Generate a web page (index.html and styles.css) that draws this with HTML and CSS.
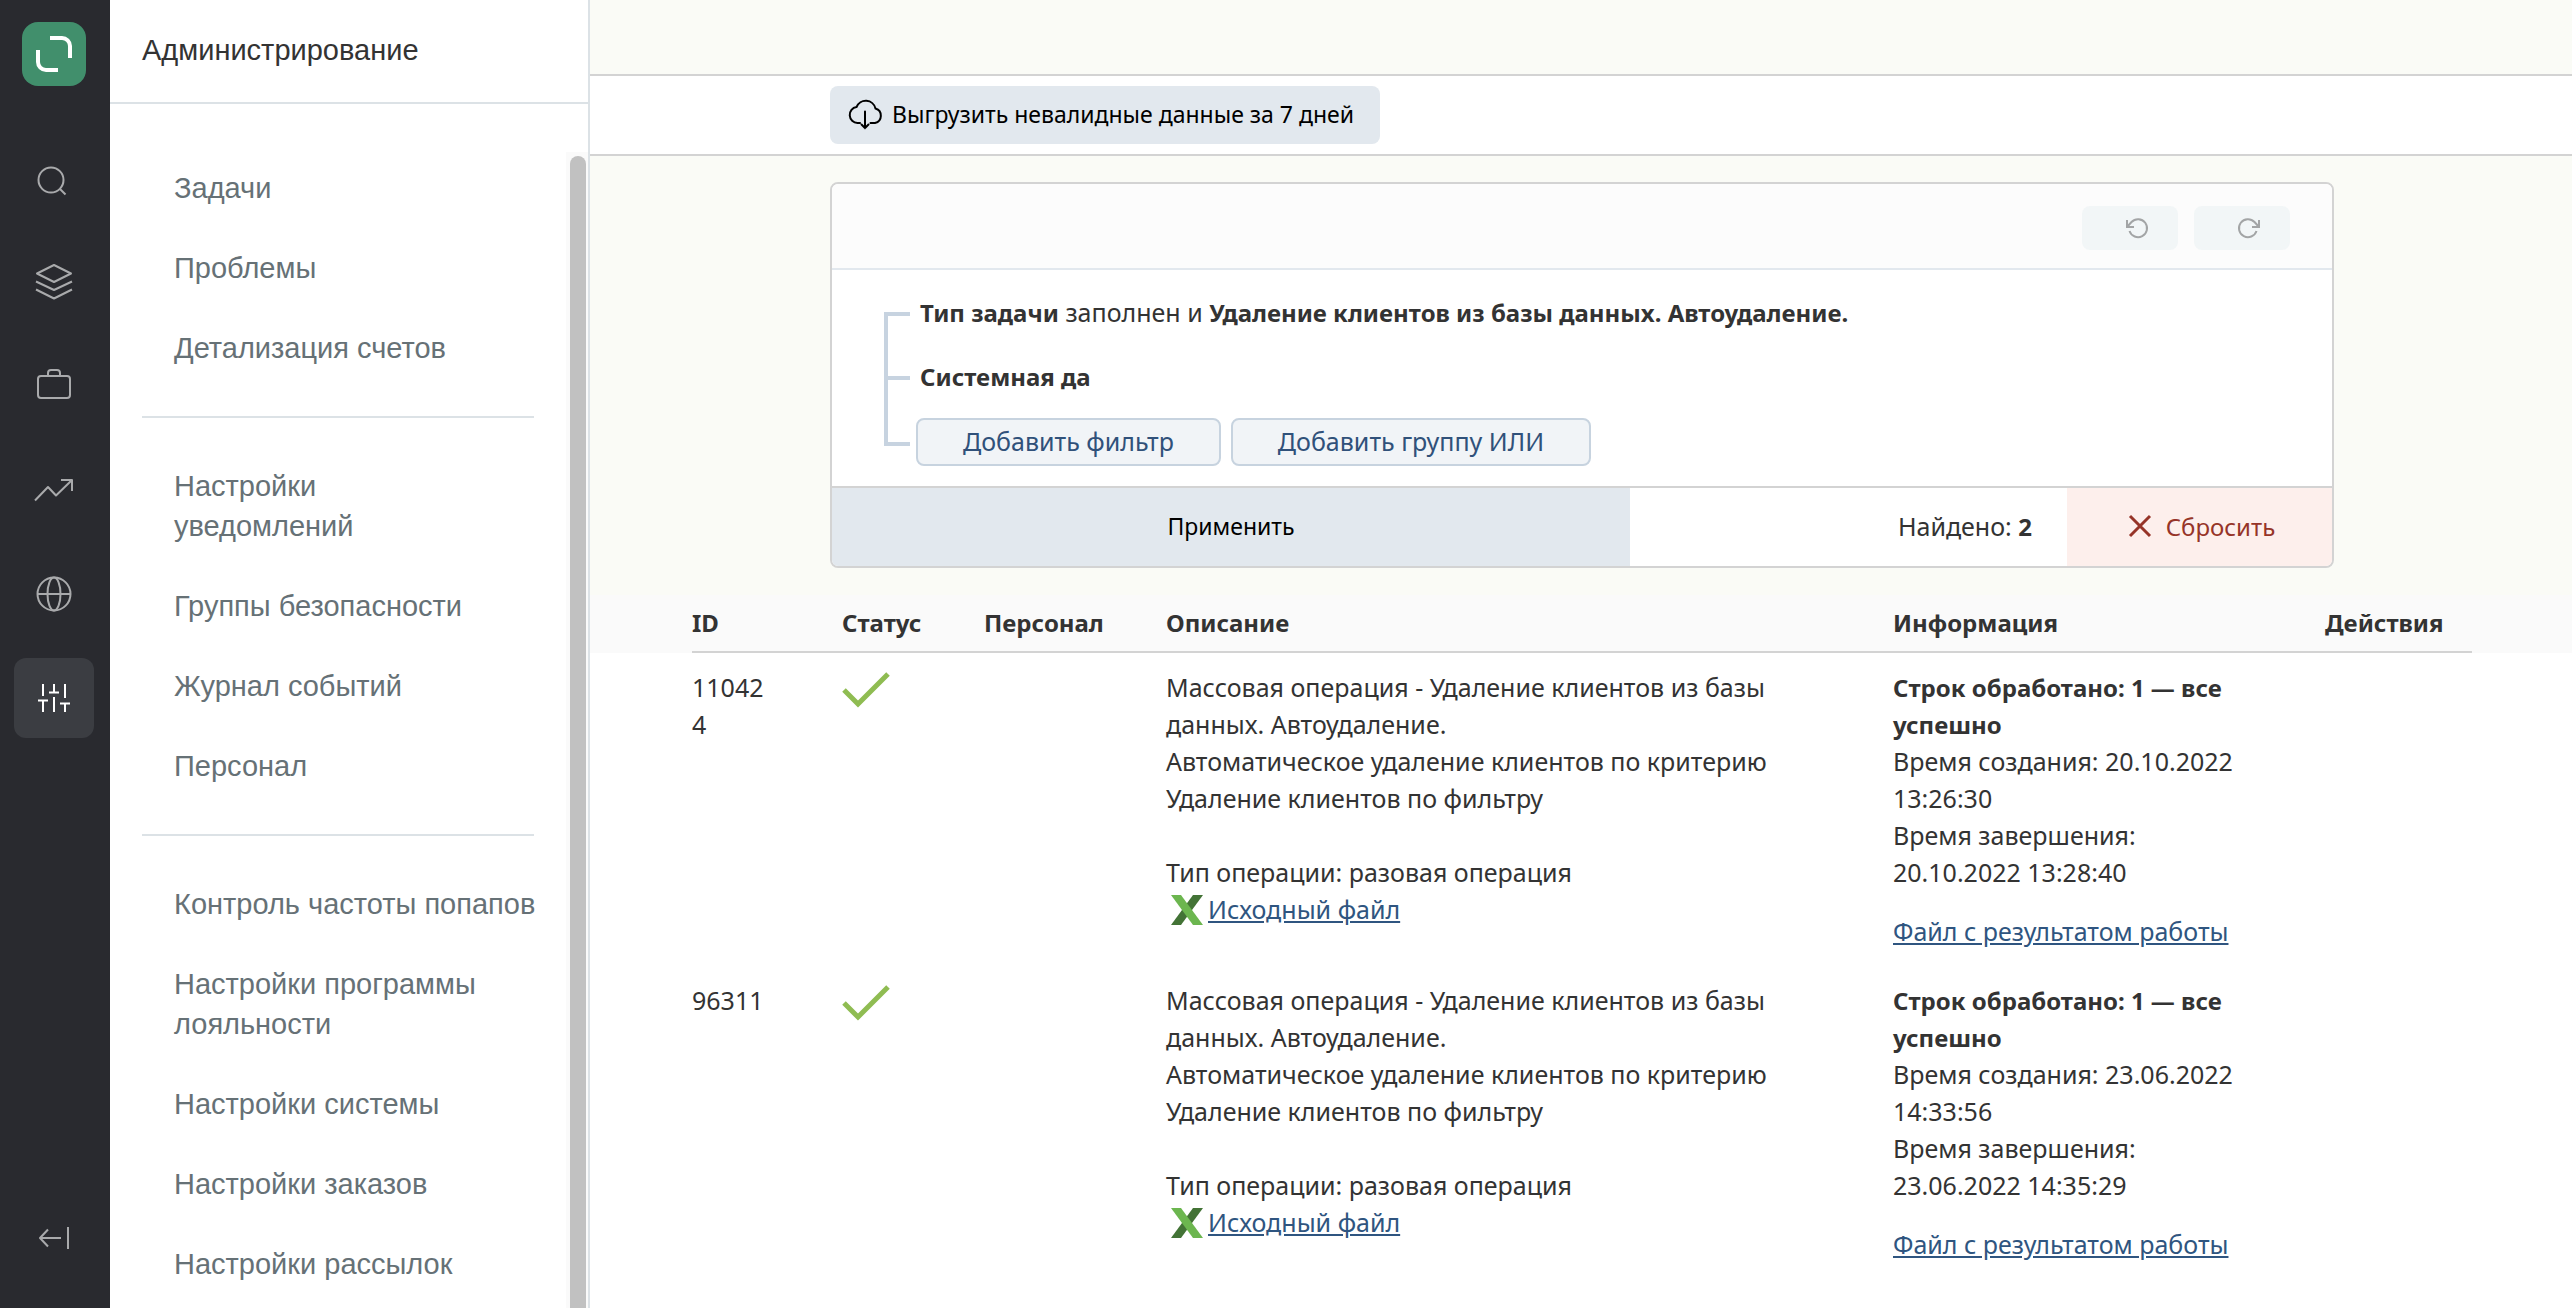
FILE: index.html
```html
<!DOCTYPE html>
<html lang="ru">
<head>
<meta charset="utf-8">
<title>Администрирование</title>
<link rel="stylesheet" href="styles.css">
</head>
<body>
<div class="app">
  <nav class="rail" aria-label="Разделы">
    <a class="logo" href="#" aria-label="Главная">
      <svg width="64" height="64" viewBox="0 0 64 64" fill="none" stroke="#fff" stroke-width="4"><path d="M28 16h12a8 8 0 0 1 8 8v12M16 28v12a8 8 0 0 0 8 8h12"/></svg>
    </a>
    <div class="rail-items">
      <button class="rail-btn" aria-label="Поиск"><svg class="ico" viewBox="0 0 40 40"><circle cx="17" cy="22" r="12.500"/><path d="M26 31l5.500 5.500"/></svg></button>
      <button class="rail-btn" aria-label="Слои"><svg class="ico" viewBox="0 0 40 40"><path d="M20 3l17 8.500L20 20 3 11.500zM2 19.500l18 8.500 18-8.500M2 27.500L20 36.500l18-9"/></svg></button>
      <button class="rail-btn" aria-label="Портфель"><svg class="ico" viewBox="0 0 40 40"><rect x="4" y="10" width="32" height="22" rx="3"/><path d="M14 10V7a3 3 0 0 1 3-3h6a3 3 0 0 1 3 3v3"/></svg></button>
      <button class="rail-btn" aria-label="Аналитика"><svg class="ico" viewBox="0 0 40 40"><path d="M1 30.500L14 17l8 8.500L38 10M27 10h11v11"/></svg></button>
      <button class="rail-btn" aria-label="Сайт"><svg class="ico" viewBox="0 0 40 40"><circle cx="20" cy="20" r="16.500"/><ellipse cx="20" cy="20" rx="6.500" ry="16.500"/><path d="M3.500 20h33"/></svg></button>
      <button class="rail-btn active" aria-label="Настройки"><svg class="ico" viewBox="0 0 40 40"><path d="M9 6v12M9 22.500V34M4 22.500h10M20 6v8.500M15 14.500h10M20 19v15M31 6v14M31 25.500V34M26 25.500h10"/></svg></button>
    </div>
    <button class="rail-btn collapse" aria-label="Свернуть"><svg class="ico" viewBox="0 0 40 40"><path d="M27 20H6M14 11.500L6 20l8 8.500M34 9v22"/></svg></button>
  </nav>

  <aside class="panel">
    <h1 class="panel-title">Администрирование</h1>
    <div class="panel-body">
      <div class="menu">
        <ul class="menu-group">
          <li><a href="#">Задачи</a></li>
          <li><a href="#">Проблемы</a></li>
          <li><a href="#">Детализация счетов</a></li>
        </ul>
        <ul class="menu-group">
          <li><a href="#">Настройки<br>уведомлений</a></li>
          <li><a href="#">Группы безопасности</a></li>
          <li><a href="#">Журнал событий</a></li>
          <li><a href="#">Персонал</a></li>
        </ul>
        <ul class="menu-group">
          <li><a href="#">Контроль частоты попапов</a></li>
          <li><a href="#">Настройки программы<br>лояльности</a></li>
          <li><a href="#">Настройки системы</a></li>
          <li><a href="#">Настройки заказов</a></li>
          <li><a href="#">Настройки рассылок</a></li>
        </ul>
      </div>
      <div class="scroll-track"><div class="scroll-thumb"></div></div>
    </div>
  </aside>

  <main class="main">
    <div class="topbar"></div>
    <div class="toolbar">
      <button class="export-btn">
        <svg class="cloud" width="36" height="32" viewBox="0 0 36 32"><path d="M12 25H9.500a8 8 0 0 1-1-15.900A10 10 0 0 1 27.500 10.500a7.500 7.500 0 0 1-.5 14.500h-4.500M17 13.500v16.500M13.500 26.500l3.500 3.500 3.500-3.500"/></svg>
        <span>Выгрузить невалидные данные за 7 дней</span>
      </button>
    </div>

    <section class="filter-wrap">
      <div class="filter">
        <div class="filter-head">
          <button class="hist-btn" aria-label="Отменить"><svg width="24" height="24" viewBox="0 0 24 24"><path d="M2 4v7h7M2 11l4.500-5A9 9 0 1 1 4.500 15"/></svg></button>
          <button class="hist-btn" aria-label="Повторить"><svg width="24" height="24" viewBox="0 0 24 24"><path d="M22 4v7h-7M22 11l-4.500-5A9 9 0 1 0 19.500 15"/></svg></button>
        </div>
        <div class="filter-body">
          <div class="bracket"><span></span><span></span></div>
          <div class="conditions">
            <p class="cond"><b>Тип задачи</b> заполнен и <b>Удаление клиентов из базы данных. Автоудаление.</b></p>
            <p class="cond"><b>Системная да</b></p>
            <div class="cond-actions">
              <button class="add-btn">Добавить фильтр</button>
              <button class="add-btn">Добавить группу ИЛИ</button>
            </div>
          </div>
        </div>
        <div class="filter-foot">
          <button class="apply-btn">Применить</button>
          <div class="found">Найдено: <b>2</b></div>
          <button class="reset-btn"><svg width="24" height="24" viewBox="0 0 24 24"><path d="M2 2l20 20M22 2L2 22"/></svg><span>Сбросить</span></button>
        </div>
      </div>
    </section>

    <section class="results">
      <table class="tasks">
        <colgroup><col class="c-id"><col class="c-status"><col class="c-staff"><col><col class="c-info"><col class="c-act"></colgroup>
        <thead>
          <tr><th>ID</th><th>Статус</th><th>Персонал</th><th>Описание</th><th>Информация</th><th>Действия</th></tr>
        </thead>
        <tbody>
          <tr>
            <td class="id">110424</td>
            <td><svg class="check" width="48" height="38" viewBox="0 0 48 38"><path d="M2 19l14 14L46 3"/></svg></td>
            <td></td>
            <td class="desc">Массовая операция - Удаление клиентов из базы данных. Автоудаление.<br>Автоматическое удаление клиентов по критерию<br>Удаление клиентов по фильтру<br><br>Тип операции: разовая операция
              <div class="file"><svg class="xls" width="32" height="30" viewBox="0 0 32 30"><path fill="#437336" d="M22 0h10L10 30H0z"/><path fill="#6cb64f" d="M0 0h10l22 30H22z"/></svg><a href="#">Исходный файл</a></div></td>
            <td class="info"><b>Строк обработано: 1 — все успешно</b><br>Время создания: 20.10.2022 13:26:30<br>Время завершения: 20.10.2022 13:28:40
              <div class="result"><a href="#">Файл с результатом работы</a></div></td>
            <td></td>
          </tr>
          <tr>
            <td class="id">96311</td>
            <td><svg class="check" width="48" height="38" viewBox="0 0 48 38"><path d="M2 19l14 14L46 3"/></svg></td>
            <td></td>
            <td class="desc">Массовая операция - Удаление клиентов из базы данных. Автоудаление.<br>Автоматическое удаление клиентов по критерию<br>Удаление клиентов по фильтру<br><br>Тип операции: разовая операция
              <div class="file"><svg class="xls" width="32" height="30" viewBox="0 0 32 30"><path fill="#437336" d="M22 0h10L10 30H0z"/><path fill="#6cb64f" d="M0 0h10l22 30H22z"/></svg><a href="#">Исходный файл</a></div></td>
            <td class="info"><b>Строк обработано: 1 — все успешно</b><br>Время создания: 23.06.2022 14:33:56<br>Время завершения: 23.06.2022 14:35:29
              <div class="result"><a href="#">Файл с результатом работы</a></div></td>
            <td></td>
          </tr>
        </tbody>
      </table>
    </section>
  </main>
</div>
</body>
</html>
```
FILE: styles.css
```css
* { box-sizing: border-box; }

body {
  margin: 0;
  font-family: "Noto Sans", sans-serif;
  font-size: 25px;
  line-height: 37px;
  color: #333;
  background: #fff;
}

button {
  font: inherit;
  border: 0;
  padding: 0;
  cursor: pointer;
}

svg { display: block; }

b, th { font-size: 24px; }

.app {
  display: flex;
  height: 100vh;
  overflow: hidden;
}

/* Icon rail */
.rail {
  flex: none;
  width: 110px;
  padding: 22px 14px 30px;
  background: #292a2f;
  display: flex;
  flex-direction: column;
}

.logo {
  width: 64px;
  height: 64px;
  margin-left: 8px;
  border-radius: 16px;
  background: #418f6c;
}

.rail-items {
  margin-top: 52px;
  display: flex;
  flex-direction: column;
  gap: 24px;
}

.rail-btn {
  width: 80px;
  height: 80px;
  border-radius: 12px;
  background: transparent;
  color: #a9aaac;
  display: flex;
  align-items: center;
  justify-content: center;
}

.rail-btn.active { background: #3b3d42; color: #fff; }
.collapse { margin-top: auto; }

.ico {
  width: 40px;
  height: 40px;
  fill: none;
  stroke: currentColor;
  stroke-width: 2;
  stroke-linejoin: round;
}

/* Section menu */
.panel {
  flex: none;
  width: 480px;
  border-right: 2px solid #dce2e6;
  display: flex;
  flex-direction: column;
  font-family: "Liberation Sans", Arial, sans-serif;
  font-size: 29px;
  line-height: 40px;
}

.panel-title {
  flex: none;
  margin: 0;
  padding: 30px 32px 32px;
  border-bottom: 2px solid #dce2e6;
  font-size: inherit;
  font-weight: 400;
}

.panel-body {
  flex: 1;
  min-height: 0;
  display: flex;
}

.menu {
  flex: 1;
  padding: 44px 32px 0;
  overflow: hidden;
}

.menu-group {
  margin: 0;
  padding: 0;
  list-style: none;
}

.menu-group + .menu-group {
  margin-top: 28px;
  padding-top: 28px;
  border-top: 2px solid #dce2e6;
}

.menu-group a {
  display: block;
  padding: 20px 0 20px 32px;
  color: #667176;
  text-decoration: none;
  white-space: nowrap;
}

.scroll-track {
  width: 22px;
  margin-top: 48px;
  padding: 4px 2px 0 4px;
  background: #fafafa;
}

.scroll-thumb {
  height: 100%;
  border-radius: 8px 8px 0 0;
  background: #c1c1c1;
}

/* Main area */
.main {
  flex: 1;
  min-width: 0;
}

.topbar {
  height: 76px;
  background: #fafbf6;
  border-bottom: 2px solid #d3d3d3;
}

.toolbar {
  padding: 10px 238px 10px 240px;
  border-bottom: 2px solid #d3d3d3;
}

.export-btn {
  height: 58px;
  padding: 0 26px 2px 18px;
  border-radius: 8px;
  background: #e2e8ee;
  color: #000;
  font-size: 23px;
  display: flex;
  align-items: center;
  gap: 8px;
}

.cloud {
  fill: none;
  stroke: #000;
  stroke-width: 2;
  stroke-linecap: round;
}

.filter-wrap {
  padding: 26px 238px 27px 240px;
  background: #fafbf6;
}

.filter {
  border: 2px solid #d3d3d3;
  border-radius: 8px;
  background: #fff;
  overflow: hidden;
}

.filter-head {
  padding: 22px 42px 18px;
  border-bottom: 2px solid #e2e8ee;
  background: #fcfcfc;
  display: flex;
  justify-content: flex-end;
  gap: 16px;
}

.hist-btn {
  width: 96px;
  height: 44px;
  padding-left: 43px;
  border-radius: 8px;
  background: #f2f6f7;
}

.hist-btn svg {
  fill: none;
  stroke: #a3a5a6;
  stroke-width: 2;
}

.filter-body {
  padding: 12px 52px 20px;
  display: flex;
}

.bracket {
  flex: none;
  width: 26px;
  margin: 30px 6px 20px 0;
  border: 4px solid #c7d3e0;
  border-right: 0;
  display: flex;
  flex-direction: column;
}

.bracket span { height: 60px; }

.bracket span + span {
  flex: 1;
  border-top: 4px solid #c7d3e0;
}

.conditions { flex: 1; }

.cond {
  margin: 0;
  padding: 12px 4px 15px;
}

.cond-actions {
  margin-top: 8px;
  display: flex;
  gap: 10px;
}

.add-btn {
  height: 48px;
  padding: 0 45px 2px;
  border: 2px solid #c7d3df;
  border-radius: 8px;
  background: #f1f4f7;
  color: #30517a;
}

.filter-foot {
  height: 80px;
  border-top: 2px solid #d3d3d3;
  display: flex;
}

.apply-btn {
  width: 798px;
  padding-bottom: 2px;
  background: #e2e8ee;
  color: #000;
  font-size: 23px;
}

.found {
  flex: 1;
  padding: 20px 35px 0;
  text-align: right;
}

.reset-btn {
  width: 265px;
  padding: 0 0 2px 4px;
  background: #fdefec;
  color: #963428;
  font-size: 24px;
  display: flex;
  align-items: center;
  justify-content: center;
  gap: 14px;
}

.reset-btn svg {
  fill: none;
  stroke: currentColor;
  stroke-width: 3;
}

/* Task table */
.results {
  padding: 0 100px 0 102px;
  background: linear-gradient(#fafafa 58px, #fff 58px);
}

.tasks {
  width: 100%;
  table-layout: fixed;
  border-collapse: separate;
  border-spacing: 0;
}

.c-id { width: 150px; }
.c-status { width: 142px; }
.c-staff { width: 182px; }
.c-info { width: 432px; }
.c-act { width: 147px; }

.tasks th {
  height: 58px;
  padding: 0 0 2px;
  border-bottom: 2px solid #d3d3d3;
  text-align: left;
}

.tasks td {
  padding: 16px 0;
  vertical-align: top;
}

.tasks .id {
  padding-right: 70px;
  word-break: break-all;
}

.tasks .desc { padding-right: 80px; }
.tasks .info { padding-right: 80px; }

.tasks a { color: #2f5580; }

.check {
  margin-top: 2px;
  fill: none;
  stroke: #8fbc52;
  stroke-width: 5;
}

.file {
  padding-left: 5px;
  display: flex;
  align-items: center;
  gap: 5px;
}

.result { margin-top: 22px; }
```
